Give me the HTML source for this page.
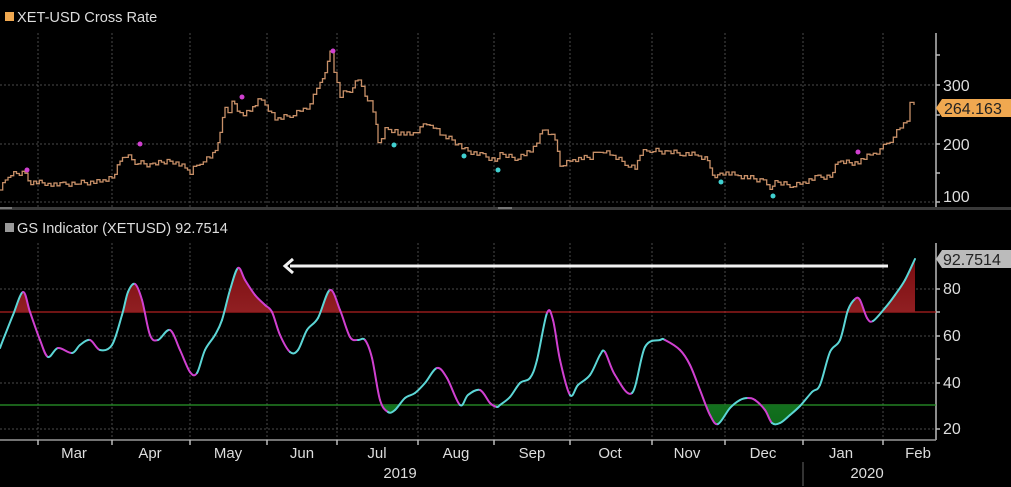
<!DOCTYPE html>
<html><head><meta charset="utf-8"><style>
html,body{margin:0;padding:0;background:#000;}
body{width:1011px;height:487px;overflow:hidden;position:relative;font-family:"Liberation Sans",sans-serif;}
svg{position:absolute;left:0;top:0}
</style></head><body>
<svg id="s" width="1011" height="487" viewBox="0 0 1011 487" xmlns="http://www.w3.org/2000/svg">
<defs>
<linearGradient id="rg" x1="0" y1="0" x2="0" y2="1"><stop offset="0" stop-color="#7a0c10"/><stop offset="1" stop-color="#c04848"/></linearGradient>
<linearGradient id="gg" x1="0" y1="0" x2="0" y2="1"><stop offset="0" stop-color="#3aa040"/><stop offset="1" stop-color="#0e6a1a"/></linearGradient>
<clipPath id="cr"><rect x="0" y="0" width="936" height="312"/></clipPath>
<clipPath id="cg"><rect x="0" y="405" width="936" height="40"/></clipPath>
</defs>
<g stroke="#4a4a4a" stroke-width="1" stroke-dasharray="2,2" fill="none">
<path d="M38 33V207M112 33V207M190 33V207M267 33V207M337 33V207M418 33V207M494 33V207M570 33V207M652 33V207M725 33V207M803 33V207M883 33V207"/>
<path d="M0 85H936M0 144H936M0 202H936"/>
<path d="M38 243V440M112 243V440M190 243V440M267 243V440M337 243V440M418 243V440M494 243V440M570 243V440M652 243V440M725 243V440M803 243V440M883 243V440"/>
<path d="M0 289H936M0 336H936M0 383H936M0 429H936"/>
</g>
<rect x="0" y="207" width="1011" height="3" fill="#3a3a3a"/>
<rect x="0" y="207" width="12" height="2" fill="#777"/><rect x="498" y="207" width="14" height="2" fill="#777"/>
<line x1="936" y1="33" x2="936" y2="207" stroke="#bbb" stroke-width="1.5"/>
<line x1="936" y1="243" x2="936" y2="440" stroke="#bbb" stroke-width="1.5"/>
<line x1="0" y1="440" x2="936" y2="440" stroke="#999" stroke-width="1.5"/>
<g stroke="#bbb" stroke-width="1.5"><path d="M936 55h4M936 85h4M936 144h4M936 173h4M936 115h4M936 202h4M936 289h4M936 312h4M936 336h4M936 359h4M936 383h4M936 429h4"/>
<path d="M38 440v5M112 440v5M190 440v5M267 440v5M337 440v5M418 440v5M494 440v5M570 440v5M652 440v5M725 440v5M803 440v5M883 440v5"/></g>
<line x1="803" y1="462" x2="803" y2="486" stroke="#666"/>
<g fill="#ddd" font-size="16">
<text x="943" y="91">300</text><text x="943" y="150">200</text><text x="943" y="202">100</text>
<text x="943" y="294">80</text><text x="943" y="341">60</text><text x="943" y="388">40</text><text x="943" y="434">20</text>
</g>
<g fill="#ddd" font-size="15" text-anchor="middle">
<text x="74" y="458">Mar</text><text x="150" y="458">Apr</text><text x="228" y="458">May</text><text x="302" y="458">Jun</text><text x="377" y="458">Jul</text><text x="456" y="458">Aug</text><text x="532" y="458">Sep</text><text x="610" y="458">Oct</text><text x="687" y="458">Nov</text><text x="763" y="458">Dec</text><text x="841" y="458">Jan</text><text x="918" y="458">Feb</text>
<text x="400" y="478">2019</text><text x="867" y="478">2020</text>
</g>
<rect x="5" y="12" width="9" height="9" fill="#f0a850"/>
<text x="17" y="22" fill="#ddd" font-size="14.6">XET-USD Cross Rate</text>
<rect x="5" y="223" width="9" height="9" fill="#999"/>
<text x="17" y="233" fill="#ddd" font-size="14.6">GS Indicator (XETUSD) 92.7514</text>
<path d="M936 108l6-9h69v18h-69z" fill="#f0a850"/>
<text x="944" y="114" fill="#222" font-size="16">264.163</text>
<path d="M936 259l6-9h69v18h-69z" fill="#bbb"/>
<text x="943" y="265" fill="#222" font-size="16">92.7514</text>
<line x1="290" y1="266" x2="888" y2="266" stroke="#f2f2f2" stroke-width="3"/>
<path d="M293 259l-8 7 8 7" stroke="#f2f2f2" stroke-width="3" fill="none"/>
<line x1="0" y1="312" x2="936" y2="312" stroke="#b02020" stroke-width="1.2"/>
<line x1="0" y1="405" x2="936" y2="405" stroke="#2a9a2a" stroke-width="1.2"/>
<g id="fills"></g>
<g id="ind"></g>
<g id="price"></g>
<g>
<circle cx="27" cy="170" r="2.5" fill="#d040d0"/><circle cx="140" cy="144" r="2.5" fill="#d040d0"/><circle cx="242" cy="97" r="2.5" fill="#d040d0"/><circle cx="333" cy="51" r="2.5" fill="#d040d0"/><circle cx="858" cy="152" r="2.5" fill="#d040d0"/>
<circle cx="394" cy="145" r="2.5" fill="#40d0d0"/><circle cx="464" cy="156" r="2.5" fill="#40d0d0"/><circle cx="498" cy="170" r="2.5" fill="#40d0d0"/><circle cx="721" cy="182" r="2.5" fill="#40d0d0"/><circle cx="773" cy="196" r="2.5" fill="#40d0d0"/>
</g>
</svg>
<script>
var NS="http://www.w3.org/2000/svg";
var P=[[0,190],[8,175],[25,172],[28,182],[45,183],[60,185],[75,183],[100,182],[112,178],[120,160],[125,155],[135,162],[150,165],[170,160],[185,168],[190,172],[200,162],[210,158],[218,145],[220,130],[225,105],[228,115],[232,100],[240,115],[250,110],[258,100],[265,105],[275,120],[290,115],[300,110],[310,105],[320,80],[325,75],[330,50],[334,70],[340,95],[350,90],[358,80],[365,95],[370,102],[376,122],[378,145],[385,130],[395,132],[410,135],[420,128],[430,123],[440,135],[452,140],[465,150],[480,155],[495,160],[500,155],[515,158],[530,152],[540,135],[545,130],[555,140],[560,165],[570,160],[590,157],[600,150],[610,155],[625,163],[635,168],[640,153],[650,150],[665,152],[680,153],[695,155],[705,158],[710,168],[715,180],[720,172],[735,175],[760,180],[770,187],[775,183],[790,185],[800,183],[815,178],[830,176],[838,162],[855,163],[870,155],[880,150],[890,140],[900,128],[907,120],[910,100],[914,105]];
var d="M"+P[0][0]+" "+P[0][1];
for(var i=1;i<P.length;i++){var a=P[i-1],b=P[i];var n=Math.max(1,Math.round((b[0]-a[0])/3));for(var k=1;k<=n;k++){var x=a[0]+(b[0]-a[0])*k/n;var y=a[1]+(b[1]-a[1])*k/n+((k*7+i*3)%5-2)*1.2;d+="H"+x.toFixed(1)+"V"+y.toFixed(1);}}
var pp=document.createElementNS(NS,"path");pp.setAttribute("d",d);pp.setAttribute("stroke","#c89068");pp.setAttribute("stroke-width","1.3");pp.setAttribute("fill","none");document.getElementById("price").appendChild(pp);
var I=[[0,348],[5,335],[13,315],[23,292],[30,312],[40,340],[48,357],[58,348],[72,353],[80,345],[90,340],[100,350],[112,345],[122,315],[128,292],[135,284],[142,300],[150,335],[158,340],[170,330],[180,350],[190,372],[197,373],[205,350],[215,335],[222,320],[230,290],[238,268],[245,280],[255,295],[265,305],[272,312],[280,335],[290,352],[298,350],[307,330],[318,318],[330,290],[340,310],[350,337],[358,340],[365,340],[372,358],[380,400],[388,412],[395,410],[405,398],[415,393],[425,383],[437,368],[447,378],[460,405],[468,395],[480,390],[490,403],[497,407],[500,405],[510,397],[520,383],[530,378],[537,360],[547,313],[553,320],[560,360],[570,395],[578,385],[590,375],[600,355],[605,352],[615,375],[632,393],[645,347],[660,340],[665,340],[680,350],[690,365],[700,390],[710,415],[718,424],[730,408],[740,400],[748,398],[755,400],[765,410],[772,423],[780,423],[790,415],[800,406],[812,392],[820,385],[830,352],[840,340],[848,310],[855,299],[860,300],[867,318],[873,321],[885,308],[895,295],[905,280],[915,259]];
function seg(i){var p0=I[Math.max(0,i-2)],p1=I[i-1],p2=I[i],p3=I[Math.min(I.length-1,i+1)];
var c1x=p1[0]+(p2[0]-p0[0])/6,c1y=p1[1]+(p2[1]-p0[1])/6,c2x=p2[0]-(p3[0]-p1[0])/6,c2y=p2[1]-(p3[1]-p1[1])/6;
return " C"+c1x.toFixed(1)+" "+c1y.toFixed(1)+" "+c2x.toFixed(1)+" "+c2y.toFixed(1)+" "+p2[0]+" "+p2[1];}
var full="M"+I[0][0]+" "+I[0][1];for(var i=1;i<I.length;i++)full+=seg(i);
var f=document.getElementById("fills");
var r=document.createElementNS(NS,"path");r.setAttribute("d",full+" L915 312 L0 312Z");r.setAttribute("fill","url(#rg)");r.setAttribute("clip-path","url(#cr)");f.appendChild(r);
var g=document.createElementNS(NS,"path");g.setAttribute("d",full+" L915 405 L0 405Z");g.setAttribute("fill","url(#gg)");g.setAttribute("clip-path","url(#cg)");f.appendChild(g);
var ind=document.getElementById("ind");
for(var i=1;i<I.length;i++){var l=document.createElementNS(NS,"path");l.setAttribute("d","M"+I[i-1][0]+" "+I[i-1][1]+seg(i));l.setAttribute("fill","none");l.setAttribute("stroke",I[i][1]<=I[i-1][1]?"#5cd6d6":"#d040d0");l.setAttribute("stroke-width","2");l.setAttribute("stroke-linecap","round");ind.appendChild(l);}
</script>
</body></html>
